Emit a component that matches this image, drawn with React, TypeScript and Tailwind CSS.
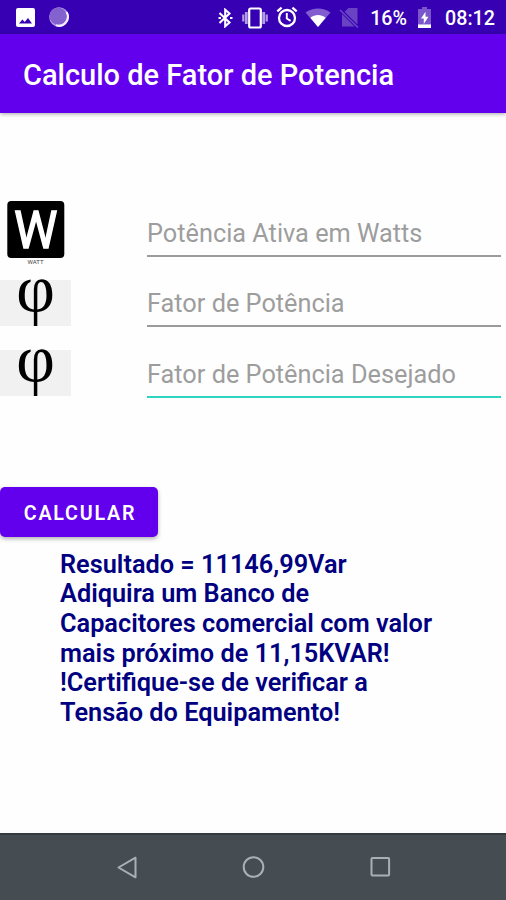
import { useState } from "react";
import { clsx } from "clsx";

const fields = [
  { id: "potencia", hint: "Potência Ativa em Watts" },
  { id: "fator", hint: "Fator de Potência" },
  { id: "desejado", hint: "Fator de Potência Desejado" },
];

const resultLines = [
  "Resultado = 11146,99Var",
  "Adiquira um Banco de",
  "Capacitores comercial com valor",
  "mais próximo de 11,15KVAR!",
  "!Certifique-se de verificar a",
  "Tensão do Equipamento!",
];

function StatusBar() {
  return (
    <div className="flex h-[34px] shrink-0 items-center bg-[#3700b3] pr-[11px] pl-4 text-white">
      <svg className="h-[19px] w-[19px]" viewBox="0 0 19 19">
        <path
          fill="#fff"
          fillRule="evenodd"
          d="M2 0h15a2 2 0 0 1 2 2v15a2 2 0 0 1-2 2H2a2 2 0 0 1-2-2V2a2 2 0 0 1 2-2ZM3 15.500h13l-4-5.500-3.300 4-2.300-2.600Z"
        />
      </svg>
      <svg className="ml-[14px] h-5 w-5" viewBox="0 0 20 20">
        <circle cx="10" cy="10" r="9.800" fill="#b9a3e6" />
        <circle cx="9.200" cy="9.200" r="8.600" fill="#8361cf" />
        <path d="M17.500 5A9 9 0 0 1 7 18.300" fill="none" stroke="#f4efff" strokeWidth="2" />
      </svg>

      <div className="flex flex-1 items-center justify-end">
        <svg className="mt-px h-5 w-[15px]" viewBox="0 0 15 20" fill="none" stroke="#fff" strokeWidth="2.100">
          <path d="M1.500 5l10 9.500L7.200 18.300V1.700l4.300 3.800L1.500 15" />
          <path d="M.5 10h2.500M12 10h2.500" strokeWidth="2.200" />
        </svg>
        <svg className="mt-px ml-[9px] h-[22px] w-[26px]" viewBox="0 0 26 22" fill="none">
          <rect x="7.200" y="1.500" width="11.600" height="19" rx="1.500" stroke="#fff" strokeWidth="2.200" />
          <path d="M4.300 5v12M21.700 5v12" stroke="#b39be5" strokeWidth="2.800" />
          <path d="M1.300 7.500v7M24.700 7.500v7" stroke="#b39be5" strokeWidth="2.200" />
        </svg>
        <svg className="ml-2 h-[22px] w-[22px]" viewBox="0 0 22 22" fill="none" stroke="#fff">
          <circle cx="11" cy="12" r="8" strokeWidth="2.300" />
          <path d="M10.800 7v5.500l3.800 2.400" strokeWidth="1.900" />
          <path d="M1.300 5.400l4.300-3.700M20.700 5.400l-4.300-3.700" strokeWidth="2.300" />
        </svg>
        <svg className="ml-[7px] h-[19px] w-[26px]" viewBox="0 0 26 19">
          <path d="M.5 4.500C8-1 18-1 25.500 4.500L13 19Z" fill="#825dd0" />
          <path d="M5.300 9.700c5-3.600 10.400-3.600 15.400 0L13 19Z" fill="#fff" />
        </svg>
        <svg className="mt-px ml-[8px] h-[21px] w-[20px]" viewBox="0 0 20 21">
          <path d="M18.500 1v16.500L5.500 4.800 9.500 1ZM3 7l12.500 12.500H3Z" fill="#6a43c4" />
          <path d="M1 3l18 17.500" stroke="#6a43c4" strokeWidth="1.700" />
        </svg>
        <span className="ml-[11px] pt-[3px] text-[19.700px] leading-none font-medium">16%</span>
        <svg className="mt-px ml-[11px] h-[21px] w-[13px]" viewBox="0 0 13 21">
          <path d="M4 0h5v2h4v15H0V2h4Z" fill="#7b56cb" />
          <path d="M0 17.300h13V21H0Z" fill="#fff" />
          <path d="M7.500 4.800 3 11.500h2.800V17l4.600-7.300H7.500Z" fill="#fff" />
        </svg>
        <span className="ml-[14px] pt-[3px] text-[19.700px] leading-none font-medium">08:12</span>
      </div>
    </div>
  );
}

function WattIcon() {
  return (
    <svg className="ml-[7px] block h-16 w-[58px] overflow-visible" viewBox="0 0 58 64">
      <rect x=".3" y="0" width="57" height="57" rx="4" fill="#000" />
      <text
        x="28.700"
        y="46.800"
        textAnchor="middle"
        textLength="43.500"
        lengthAdjust="spacingAndGlyphs"
        fontFamily="Roboto, sans-serif"
        fontSize="52"
        fill="#fff"
        stroke="#fff"
        strokeWidth="1.300"
      >
        W
      </text>
      <text
        x="28.500"
        y="63"
        textAnchor="middle"
        textLength="16"
        lengthAdjust="spacingAndGlyphs"
        fontFamily="Roboto, sans-serif"
        fontSize="5"
        fill="#444"
      >
        WATT
      </text>
    </svg>
  );
}

function PhiIcon() {
  return (
    <svg className="block h-[46px] w-[71px] overflow-visible bg-[#f1f1f1]" viewBox="0 0 71 46">
      <text
        x="35.500"
        y="32"
        textAnchor="middle"
        fontFamily="'Liberation Serif', serif"
        fontSize="67"
        fill="#000"
      >
        φ
      </text>
    </svg>
  );
}

function NavigationBar() {
  return (
    <nav className="flex h-[67px] shrink-0 items-center justify-between border-t-2 border-[#353b3f] bg-[#464d52] pr-[115px] pl-[117px]">
      <svg className="h-[23px] w-[20px]" viewBox="0 0 20 23" fill="none" stroke="#a9b0b4" strokeWidth="2">
        <path d="M18.500 1.700v19.600L1.500 11.500Z" strokeLinejoin="round" />
      </svg>
      <svg className="h-[23px] w-[23px]" viewBox="0 0 23 23" fill="none" stroke="#a9b0b4" strokeWidth="2">
        <circle cx="11.500" cy="11" r="9.800" />
      </svg>
      <svg className="h-[21px] w-[21px]" viewBox="0 0 21 21" fill="none" stroke="#a9b0b4" strokeWidth="2">
        <rect x="1.500" y="1" width="17.600" height="17.600" rx="1" />
      </svg>
    </nav>
  );
}

export default function App() {
  const [values, setValues] = useState<Record<string, string>>({});
  const [active, setActive] = useState("desejado");

  return (
    <div className="flex h-[900px] w-[506px] flex-col overflow-hidden bg-[#fefefe] font-['Roboto',sans-serif]">
      <StatusBar />
      <header className="z-10 flex h-[79px] shrink-0 items-center bg-[#6200ee] pt-[4px] pl-[23px] shadow-[0_1px_4px_rgba(0,0,0,0.35)]">
        <h1 className="text-[29px] font-medium text-white">Calculo de Fator de Potencia</h1>
      </header>

      <main className="flex flex-1 flex-col items-start">
        <div className="flex w-full pt-[88px] pr-[5px]">
          <div className="flex w-[147px] flex-col">
            <WattIcon />
            <div className="mt-[15px] flex flex-col gap-6">
              <PhiIcon />
              <PhiIcon />
            </div>
          </div>
          <div className="-mt-[14px] flex flex-1 flex-col">
            {fields.map((field) => (
              <div key={field.id} className="flex h-[70.300px] flex-col">
                <input
                  className={clsx(
                    "h-[70px] w-full border-b-2 bg-transparent pt-[29px] pb-[4px] text-[25.300px] text-gray-800 outline-none placeholder:text-[#9d9d9d]",
                    field.id === active ? "border-[#2fd5c0]" : "border-[#9b9b9b]",
                  )}
                  placeholder={field.hint}
                  value={values[field.id] ?? ""}
                  onFocus={() => setActive(field.id)}
                  onChange={(e) => setValues({ ...values, [field.id]: e.target.value })}
                />
              </div>
            ))}
          </div>
        </div>

        <button className="mt-[89px] h-[50px] w-[158px] rounded-[5px] bg-[#6200ee] pt-[4px] pl-[2px] text-[19.700px] font-semibold tracking-[1.760px] text-white shadow-[0_2px_4px_rgba(0,0,0,0.3)]">
          CALCULAR
        </button>

        <div className="mt-[13px] ml-[60px] text-[25.300px] leading-[29.600px] font-semibold text-[#000080]">
          {resultLines.map((line) => (
            <p key={line} className="whitespace-nowrap">
              {line}
            </p>
          ))}
        </div>
      </main>

      <NavigationBar />
    </div>
  );
}
